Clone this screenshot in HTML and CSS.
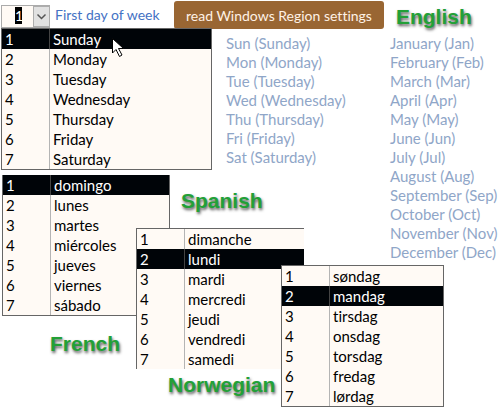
FILE: index.html
```html
<!DOCTYPE html>
<html lang="en">
	<head>
		<meta charset="utf-8">
		<title>First day of week</title>
		<link rel="stylesheet" href="styles.css">
	</head>
	<body>
		<div class="board">
			<div class="toolbar">
				<div class="combo">
					<select id="first-day">
						<option selected>1</option>
						<option>2</option>
						<option>3</option>
						<option>4</option>
						<option>5</option>
						<option>6</option>
						<option>7</option>
					</select>
					<svg class="arrow" viewBox="0 0 17 21" width="17" height="21"><rect x="0.5" y="0.5" width="16" height="20" fill="#e1e1e1" stroke="#adadad"/><path d="M4.5 8.5l4 4 4-4" fill="none" stroke="#555" stroke-width="1.5"/></svg>
				</div>
				<label for="first-day">First day of week</label>
				<button type="button">read Windows Region settings</button>
				<h2 class="caption">English</h2>
			</div>

			<div class="content">
				<div class="lists">
					<table class="list english">
						<tr class="on"><td>1</td><td>Sunday</td></tr>
						<tr><td>2</td><td>Monday</td></tr>
						<tr><td>3</td><td>Tuesday</td></tr>
						<tr><td>4</td><td>Wednesday</td></tr>
						<tr><td>5</td><td>Thursday</td></tr>
						<tr><td>6</td><td>Friday</td></tr>
						<tr><td>7</td><td>Saturday</td></tr>
					</table>
					<table class="list spanish" lang="es">
						<tr class="on"><td>1</td><td>domingo</td></tr>
						<tr><td>2</td><td>lunes</td></tr>
						<tr><td>3</td><td>martes</td></tr>
						<tr><td>4</td><td>miércoles</td></tr>
						<tr><td>5</td><td>jueves</td></tr>
						<tr><td>6</td><td>viernes</td></tr>
						<tr><td>7</td><td>sábado</td></tr>
					</table>
					<h2 class="caption under">French</h2>
				</div>
				<ul class="names days">
					<li>Sun (Sunday)</li>
					<li>Mon (Monday)</li>
					<li>Tue (Tuesday)</li>
					<li>Wed (Wednesday)</li>
					<li>Thu (Thursday)</li>
					<li>Fri (Friday)</li>
					<li>Sat (Saturday)</li>
				</ul>
				<ul class="names">
					<li>January (Jan)</li>
					<li>February (Feb)</li>
					<li>March (Mar)</li>
					<li>April (Apr)</li>
					<li>May (May)</li>
					<li>June (Jun)</li>
					<li>July (Jul)</li>
					<li>August (Aug)</li>
					<li>September (Sep)</li>
					<li>October (Oct)</li>
					<li>November (Nov)</li>
					<li>December (Dec)</li>
				</ul>
			</div>

			<!-- lists that overlap the ones below them -->
			<table class="list french" lang="fr">
				<tr><td>1</td><td>dimanche</td></tr>
				<tr class="on"><td>2</td><td>lundi</td></tr>
				<tr><td>3</td><td>mardi</td></tr>
				<tr><td>4</td><td>mercredi</td></tr>
				<tr><td>5</td><td>jeudi</td></tr>
				<tr><td>6</td><td>vendredi</td></tr>
				<tr><td>7</td><td>samedi</td></tr>
			</table>
			<table class="list norwegian" lang="no">
				<tr><td>1</td><td>søndag</td></tr>
				<tr class="on"><td>2</td><td>mandag</td></tr>
				<tr><td>3</td><td>tirsdag</td></tr>
				<tr><td>4</td><td>onsdag</td></tr>
				<tr><td>5</td><td>torsdag</td></tr>
				<tr><td>6</td><td>fredag</td></tr>
				<tr><td>7</td><td>lørdag</td></tr>
			</table>
			<h2 class="caption spanish-caption">Spanish</h2>
			<h2 class="caption norwegian-caption">Norwegian</h2>

			<svg class="pointer" viewBox="0 0 13 21" width="13" height="21"><path d="M0.5 0.5v14.5l3.5-3.5 3.5 7 2.5-1.5-3.5-6.5h5z" fill="#fff" stroke="#000"/></svg>
		</div>
	</body>
</html>
```
FILE: styles.css
```css
body {
	margin: 0;
	background: #fff;
	color: #000;
	font-family: Lato, "Noto Sans", sans-serif;
	font-size: 15px;
	font-variant-ligatures: none;
}

.board {
	position: relative;
	box-sizing: border-box;
	min-height: 100vh;
	padding: 1px 0 0 1px;
}

.toolbar {
	display: flex;
	align-items: flex-start;
	height: 27px;
	font-size: 14px;
}

.combo {
	position: relative;
	margin-top: 4px;
}

.combo select {
	display: block;
	appearance: none;
	width: 49px;
	height: 23px;
	margin: 0;
	padding: 0 0 2px 13px;
	border: 1px solid #ababab;
	border-radius: 0;
	background: linear-gradient(#000, #000) 13px 1px / 7px 17px no-repeat #fffaf5;
	color: #fff;
	font: inherit;
}

.arrow {
	position: absolute;
	top: 1px;
	right: 0;
	pointer-events: none;
}

label {
	flex: none;
	width: 119px;
	margin: 4px 0 0 5px;
	color: #4472c4;
	line-height: 19px;
	white-space: nowrap;
}

button {
	height: 28px;
	margin: 0;
	padding: 0 12px;
	border: 0;
	border-radius: 3px;
	background: #996633;
	color: #fff2e6;
	font: inherit;
	white-space: nowrap;
}

.caption {
	margin: 0;
	color: #22a037;
	font-family: "Liberation Sans", Arial, sans-serif;
	font-size: 21px;
	font-weight: bold;
	line-height: 24px;
	text-shadow: 1px 2px 3px #555;
}

.toolbar .caption {
	margin: 4px 0 0 12px;
}

.content {
	display: flex;
	align-items: flex-start;
}

.lists {
	width: 211px;
	margin-right: 14px;
}

.list {
	border: 1px solid #666;
	border-collapse: separate;
	border-spacing: 0;
	background: #fffaf5;
	table-layout: fixed;
}

.list td {
	height: 20px;
	padding: 0 0 0 3px;
	line-height: 20px;
}

.list td:first-child {
	width: 44px;
	border-right: 1px solid #b4b4b4;
}

.list .on {
	background: #000408;
	color: #fff;
}

.list .on td:first-child {
	border-right-color: #444;
}

.english {
	width: 100%;
}

.spanish {
	width: 168px;
	margin: 5px 0 0 1px;
	border-top: 0;
}

.under {
	margin: 16px 0 0 49px;
}

.names {
	margin: 6px 0 0;
	padding: 0;
	color: #8fa6c8;
	line-height: 19px;
	list-style: none;
	white-space: nowrap;
}

.days {
	width: 164px;
}

.french {
	position: absolute;
	top: 228px;
	left: 136px;
	width: 168px;
	border-right: 0;
	border-bottom: 0;
}

.norwegian {
	position: absolute;
	top: 265px;
	left: 281px;
	width: 163px;
}

.spanish-caption {
	position: absolute;
	top: 189px;
	left: 181px;
}

.norwegian-caption {
	position: absolute;
	top: 373px;
	left: 168px;
}

.pointer {
	position: absolute;
	top: 38px;
	left: 112px;
}
```
